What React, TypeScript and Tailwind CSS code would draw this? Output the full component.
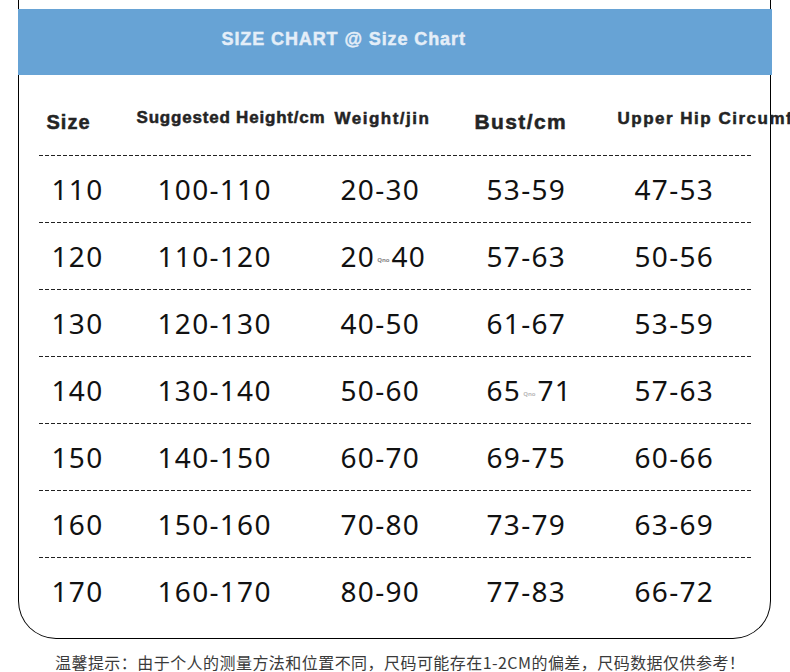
import React from "react";

// ---------------------------------------------------------------------------
// Data
// ---------------------------------------------------------------------------

interface Row {
  size: string;
  height: string;
  weight: React.ReactNode;
  bust: React.ReactNode;
  hip: string;
}

const Mark = (props: { light?: boolean }) => (
  <span
    className={
      "inline-block align-middle text-[6px] leading-none font-bold tracking-normal mx-[2px] " +
      (props.light ? "text-[#bbbbbb]" : "text-[#888888]")
    }
  >
    Qno
  </span>
);

const ROWS: Array<Row> = [
  { size: "110", height: "100-110", weight: "20-30", bust: "53-59", hip: "47-53" },
  {
    size: "120",
    height: "110-120",
    weight: (
      <>
        20
        <Mark />
        40
      </>
    ),
    bust: "57-63",
    hip: "50-56",
  },
  { size: "130", height: "120-130", weight: "40-50", bust: "61-67", hip: "53-59" },
  {
    size: "140",
    height: "130-140",
    weight: "50-60",
    bust: (
      <>
        65
        <Mark light />
        71
      </>
    ),
    hip: "57-63",
  },
  { size: "150", height: "140-150", weight: "60-70", bust: "69-75", hip: "60-66" },
  { size: "160", height: "150-160", weight: "70-80", bust: "73-79", hip: "63-69" },
  { size: "170", height: "160-170", weight: "80-90", bust: "77-83", hip: "66-72" },
];

const GRID = "grid grid-cols-[90px_200px_140px_140px_142px]";

function Dashed() {
  return (
    <div className="h-px w-full bg-[linear-gradient(to_right,#222222_4px,transparent_4px)] bg-[length:6px_1px] bg-repeat-x" />
  );
}

// ---------------------------------------------------------------------------
// Page
// ---------------------------------------------------------------------------

export default function App() {
  return (
    <div className="relative h-[672px] w-[790px] overflow-hidden bg-white">
      <div className="ml-[18px] w-[753px] rounded-b-[38px] border-x-[1.5px] border-b-[1.5px] border-black pt-[9px] pb-[14px]">
        {/* title bar */}
        <div className="-mx-[1.5px] h-[66px] bg-[#67a3d5] pt-[21px] pl-[204px]">
          <p className="font-['Liberation_Sans',Arial,sans-serif] text-[18px] leading-[18px] font-bold tracking-[0.9px] text-[#e4eef8] [-webkit-text-stroke:0.45px_#e4eef8] whitespace-nowrap">
            SIZE CHART @ Size Chart
          </p>
        </div>

        <div className="ml-[19.5px] w-[712px]">
          {/* header */}
          <div
            className={
              GRID +
              " h-[80px] font-['Liberation_Sans',Arial,sans-serif] font-bold text-[#242424] [-webkit-text-stroke:0.5px_#242424] whitespace-nowrap"
            }
          >
            <div className="pl-[8px] pt-[37px] text-[20px] leading-[20px] tracking-[1px]">
              Size
            </div>
            <div className="pl-[8px] pt-[34px] text-[17px] leading-[17px] tracking-[0.8px]">
              Suggested Height/cm
            </div>
            <div className="pl-[6px] pt-[35px] text-[17px] leading-[17px] tracking-[1.5px]">
              Weight/jin
            </div>
            <div className="pl-[6px] pt-[36px] text-[21px] leading-[21px] tracking-[1.4px]">
              Bust/cm
            </div>
            <div className="pl-[9px] pt-[35px] text-[17px] leading-[17px] tracking-[1.5px]">
              Upper Hip Circumference/cm
            </div>
          </div>

          {/* body */}
          {ROWS.map((r) => (
            <div key={r.size}>
              <Dashed />
              <div
                className={
                  GRID +
                  " h-[66px] items-center font-['Noto_Sans',sans-serif] text-[28px] leading-[28px] tracking-[1.3px] text-[#111111] whitespace-nowrap"
                }
              >
                <div className="pl-[13px]">{r.size}</div>
                <div className="pl-[29px]">{r.height}</div>
                <div className="pl-[12px]">{r.weight}</div>
                <div className="pl-[18px]">{r.bust}</div>
                <div className="pl-[26px]">{r.hip}</div>
              </div>
            </div>
          ))}
        </div>
      </div>

      {/* footer note */}
      <p className="mt-[14px] pl-[55px] font-['Noto_Sans_CJK_SC',serif] text-[16px] leading-[18px] tracking-[0.45px] text-[#3a3a3a] whitespace-nowrap">
        温馨提示：由于个人的测量方法和位置不同，尺码可能存在1-2CM的偏差，尺码数据仅供参考！
      </p>
    </div>
  );
}
